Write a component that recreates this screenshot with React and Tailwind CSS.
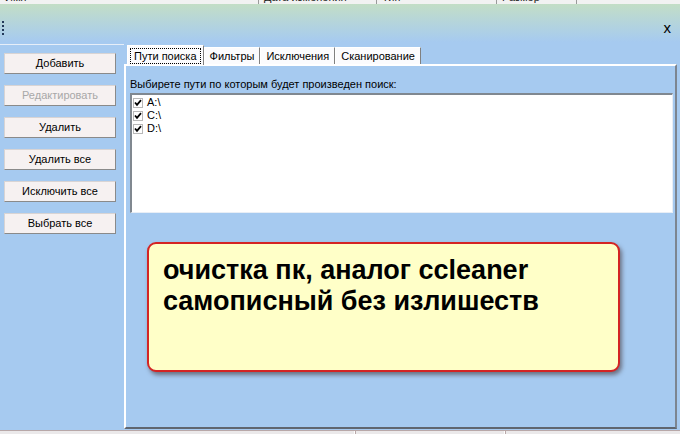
import React from "react";

const Check = () => (
  <span className="w-[10px] h-[10px] bg-white border border-[#b8b8b8] flex items-center justify-center mr-[4px]">
    <svg width="8" height="8" viewBox="0 0 8 8">
      <path d="M1 3.5 L3 5.8 L7 1.2" stroke="#000" strokeWidth="1.8" fill="none" />
    </svg>
  </span>
);

const Btn = ({ children, disabled }) => (
  <div
    className={
      "w-[112px] h-[21px] ml-[4px] flex items-center justify-center bg-[#f6f1f1] border border-t-[#d8d4d4] border-l-[#d8d4d4] border-r-[#8a8a8a] border-b-[#8a8a8a] text-[11px] " +
      (disabled ? "text-[#a8a8a8]" : "text-black")
    }
  >
    {children}
  </div>
);

const Tab = ({ children, active }) => (
  <div
    className={
      "bg-[#fbfbfd] border-l border-t border-white border-r border-r-[#808080] flex items-center text-[11px] text-black " +
      (active ? "h-[20px] px-[2px] -mb-[1px] relative z-10" : "h-[17px] px-[5px] mt-[3px]")
    }
  >
    {active ? (
      <span className="border border-dotted border-black px-[3px] leading-[14px]">{children}</span>
    ) : (
      children
    )}
  </div>
);

export default function App() {
  return (
    <div
      className="w-[680px] h-[434px] bg-[#a6caf0] flex flex-col overflow-hidden relative"
      style={{ fontFamily: '"Liberation Sans", Arial, sans-serif' }}
    >
      {/* top list header strip (cut) */}
      <div className="h-[4px] bg-[#f2f2f2] relative overflow-hidden text-[11px] text-[#222]">
        <div className="flex -mt-[9px] h-[14px] leading-[13px]">
          <div className="w-[259px] pl-[5px] border-r border-[#9a9a9a]">Имя ▔</div>
          <div className="w-[118px] pl-[5px] border-r border-[#9a9a9a]">Дата изменения</div>
          <div className="w-[120px] pl-[5px] border-r border-[#9a9a9a]">Тип</div>
          <div className="w-[80px] pl-[5px] border-r border-[#9a9a9a]">Размер</div>
        </div>
      </div>
      {/* gradient caption */}
      <div className="h-[38px] bg-gradient-to-b from-[#c3dec6] to-[#a6caf0] flex items-end justify-between pb-[7px]">
        <div className="ml-[2px] h-[14px] w-[2px] border-l-2 border-dotted border-[#223a5a]" />
        <div className="mr-[9px] text-[15px] leading-[14px] text-black">x</div>
      </div>
      {/* main */}
      <div className="flex-1 flex">
        <div className="w-[124px] flex flex-col border-t border-[#e6eef8] mt-[2px]">
          <div className="flex flex-col gap-[11px] pt-[8px]">
            <Btn>Добавить</Btn>
            <Btn disabled>Редактировать</Btn>
            <Btn>Удалить</Btn>
            <Btn>Удалить все</Btn>
            <Btn>Исключить все</Btn>
            <Btn>Выбрать все</Btn>
          </div>
        </div>
        <div className="flex-1 flex flex-col mr-[3px] mb-[1px]">
          <div className="flex pl-[3px] pt-[2px] h-[22px] items-end">
            <Tab active>Пути поиска</Tab>
            <Tab>Фильтры</Tab>
            <Tab>Исключения</Tab>
            <Tab>Сканирование</Tab>
          </div>
          <div className="flex-1 border-l-2 border-t-2 border-white border-r-2 border-b-2 border-r-[#7c8590] border-b-[#5f6670] flex flex-col pl-[4px] pr-[2px]">
            <div className="text-[11px] leading-[13px] text-black mt-[12px]">
              Выбирете пути по которым будет произведен поиск:
            </div>
            <div className="mt-[2px] h-[120px] bg-white border-t-2 border-l-2 border-[#808890] border-r border-b border-r-[#e8eef6] border-b-[#e8eef6] pt-[1px] pl-[1px] text-[11px] text-black">
              {["A:\\", "C:\\", "D:\\"].map((d) => (
                <div key={d} className="flex items-center h-[13px]">
                  <Check />
                  <span className="leading-[13px]">{d}</span>
                </div>
              ))}
            </div>
          </div>
        </div>
      </div>
      {/* status strip */}
      <div className="h-[4px] bg-[#ebe9ea] border-t border-[#b8a8a8] flex">
        <div className="w-[355px] border-r border-white" />
        <div className="w-[150px] border-l border-[#b8a8a8] border-r border-r-white" />
        <div className="flex-1 border-l border-[#b8a8a8]" />
      </div>
      {/* callout annotation */}
      <div className="absolute left-[147px] top-[242px] w-[473px] h-[130px] bg-[#ffffc8] border-2 border-[#d42424] rounded-[9px] shadow-[2px_3px_4px_rgba(60,40,40,0.55)] pl-[14px] pt-[11px]">
        <div className="text-[27px] leading-[31px] font-bold text-black">
          очистка пк, аналог ccleaner
          <br />
          самописный без излишеств
        </div>
      </div>
    </div>
  );
}
